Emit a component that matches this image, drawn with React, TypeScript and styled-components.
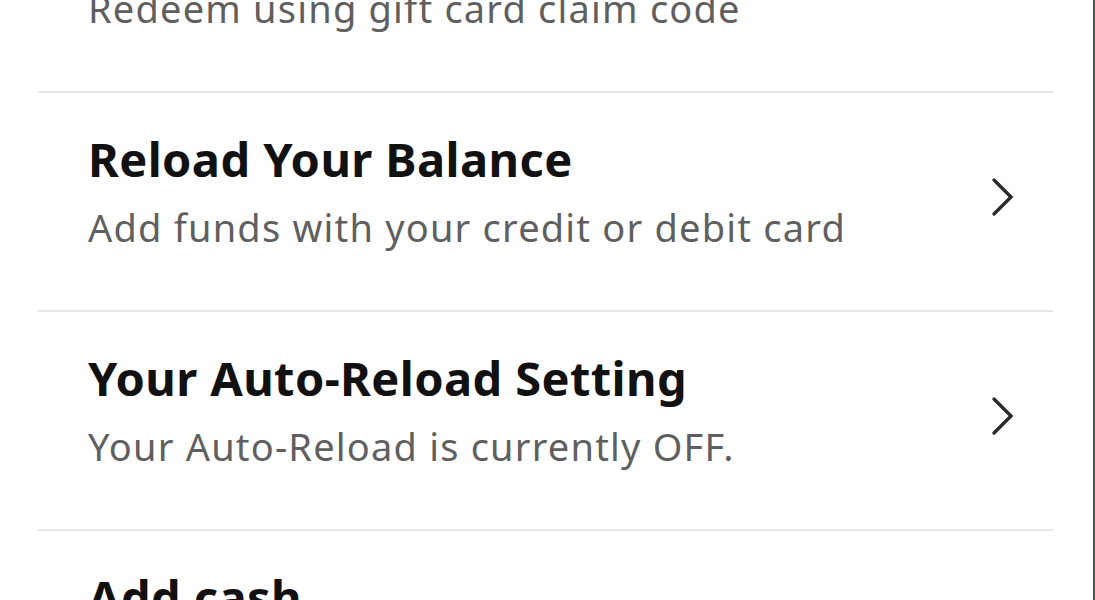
import React from "react";
import styled, { createGlobalStyle } from "styled-components";

const Global = createGlobalStyle`
  html, body { margin: 0; padding: 0; background: #ffffff; }
  body { font-family: "Noto Sans", "Open Sans", sans-serif; overflow: hidden; }
`;

const Screen = styled.div`
  width: 1095px;
  height: 600px;
  box-sizing: border-box;
  border-right: 2px solid #555555;
  background: #ffffff;
  overflow: hidden;
`;

const List = styled.ul`
  list-style: none;
  margin: -126px 40px 0 38px;
  padding: 0;
`;

const Item = styled.li`
  display: flex;
  align-items: center;
  border-bottom: 2px solid #e7e7e7;
  padding: 38px 0 60px 50px;
`;

const Texts = styled.div`
  flex: 1;
  display: flex;
  flex-direction: column;
  gap: 17px;
`;

const Title = styled.div`
  font-size: 47px;
  line-height: 56px;
  font-weight: 700;
  letter-spacing: 0.4px;
  color: #111111;
`;

const Sub = styled.div`
  font-size: 38px;
  line-height: 46px;
  letter-spacing: 1.2px;
  color: #5f5f5f;
`;

const Chevron = styled.svg`
  width: 24px;
  height: 40px;
  margin: 13px 39px 0 0;
  flex-shrink: 0;
`;

type Row = { title: string; sub: string; chevron?: boolean };

const rows: Row[] = [
  { title: "Redeem a Gift Card", sub: "Redeem using gift card claim code", chevron: true },
  { title: "Reload Your Balance", sub: "Add funds with your credit or debit card", chevron: true },
  { title: "Your Auto-Reload Setting", sub: "Your Auto-Reload is currently OFF.", chevron: true },
  { title: "Add cash", sub: "Add cash at a participating store", chevron: true },
];

export default function App() {
  return (
    <Screen>
      <Global />
      <List>
        {rows.map((r) => (
          <Item key={r.title}>
            <Texts>
              <Title>{r.title}</Title>
              <Sub>{r.sub}</Sub>
            </Texts>
            {r.chevron && (
              <Chevron viewBox="0 0 24 40" aria-hidden="true">
                <polyline
                  points="4,3 21,20 4,37"
                  fill="none"
                  stroke="#2a2a2a"
                  strokeWidth="3.4"
                  strokeLinecap="round"
                  strokeLinejoin="miter"
                />
              </Chevron>
            )}
          </Item>
        ))}
      </List>
    </Screen>
  );
}
